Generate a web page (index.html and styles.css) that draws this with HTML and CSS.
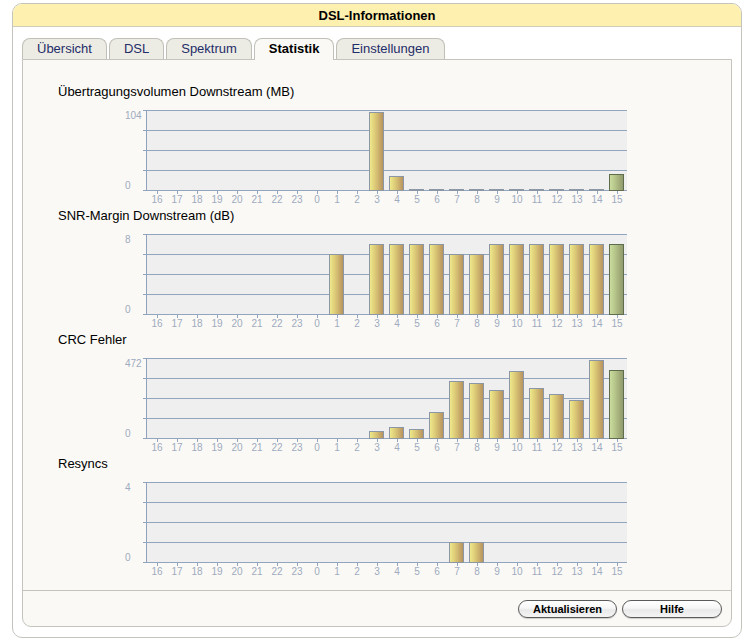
FILE: index.html
```html
<!DOCTYPE html>
<html lang="de">
<head>
<meta charset="utf-8">
<title>DSL-Informationen</title>
<link rel="stylesheet" href="styles.css">
</head>
<body>
<div class="panel">
  <div class="panel-head">DSL-Informationen</div>
  <div class="panel-body">
    <div class="tabs">
      <div class="tab">Übersicht</div>
      <div class="tab">DSL</div>
      <div class="tab">Spektrum</div>
      <div class="tab active">Statistik</div>
      <div class="tab">Einstellungen</div>
    </div>
    <div class="content">
      <div class="charts">

        <section class="chart">
          <div class="chart-title">Übertragungsvolumen Downstream (MB)</div>
          <div class="chart-row">
            <div class="yaxis"><span class="ylab">104</span><span class="ylab">0</span></div>
            <div class="yticks"></div>
            <div class="plot">
              <div class="slot"></div><div class="slot"></div><div class="slot"></div><div class="slot"></div>
              <div class="slot"></div><div class="slot"></div><div class="slot"></div><div class="slot"></div>
              <div class="slot"></div><div class="slot"></div><div class="slot"></div>
              <div class="slot"><div class="bar" style="height:79px"></div></div>
              <div class="slot"><div class="bar" style="height:15px"></div></div>
              <div class="slot"><div class="bar zero"></div></div>
              <div class="slot"><div class="bar zero"></div></div>
              <div class="slot"><div class="bar zero"></div></div>
              <div class="slot"><div class="bar zero"></div></div>
              <div class="slot"><div class="bar zero"></div></div>
              <div class="slot"><div class="bar zero"></div></div>
              <div class="slot"><div class="bar zero"></div></div>
              <div class="slot"><div class="bar zero"></div></div>
              <div class="slot"><div class="bar zero"></div></div>
              <div class="slot"><div class="bar zero"></div></div>
              <div class="slot"><div class="bar current" style="height:17px"></div></div>
            </div>
          </div>
          <div class="xaxis">
            <span class="xl">16</span><span class="xl">17</span><span class="xl">18</span><span class="xl">19</span><span class="xl">20</span><span class="xl">21</span><span class="xl">22</span><span class="xl">23</span><span class="xl">0</span><span class="xl">1</span><span class="xl">2</span><span class="xl">3</span><span class="xl">4</span><span class="xl">5</span><span class="xl">6</span><span class="xl">7</span><span class="xl">8</span><span class="xl">9</span><span class="xl">10</span><span class="xl">11</span><span class="xl">12</span><span class="xl">13</span><span class="xl">14</span><span class="xl">15</span>
          </div>
        </section>

        <section class="chart">
          <div class="chart-title">SNR-Margin Downstream (dB)</div>
          <div class="chart-row">
            <div class="yaxis"><span class="ylab">8</span><span class="ylab">0</span></div>
            <div class="yticks"></div>
            <div class="plot">
              <div class="slot"></div><div class="slot"></div><div class="slot"></div><div class="slot"></div>
              <div class="slot"></div><div class="slot"></div><div class="slot"></div><div class="slot"></div>
              <div class="slot"></div>
              <div class="slot"><div class="bar" style="height:61px"></div></div>
              <div class="slot"></div>
              <div class="slot"><div class="bar" style="height:71px"></div></div>
              <div class="slot"><div class="bar" style="height:71px"></div></div>
              <div class="slot"><div class="bar" style="height:71px"></div></div>
              <div class="slot"><div class="bar" style="height:71px"></div></div>
              <div class="slot"><div class="bar" style="height:61px"></div></div>
              <div class="slot"><div class="bar" style="height:61px"></div></div>
              <div class="slot"><div class="bar" style="height:71px"></div></div>
              <div class="slot"><div class="bar" style="height:71px"></div></div>
              <div class="slot"><div class="bar" style="height:71px"></div></div>
              <div class="slot"><div class="bar" style="height:71px"></div></div>
              <div class="slot"><div class="bar" style="height:71px"></div></div>
              <div class="slot"><div class="bar" style="height:71px"></div></div>
              <div class="slot"><div class="bar current" style="height:71px"></div></div>
            </div>
          </div>
          <div class="xaxis">
            <span class="xl">16</span><span class="xl">17</span><span class="xl">18</span><span class="xl">19</span><span class="xl">20</span><span class="xl">21</span><span class="xl">22</span><span class="xl">23</span><span class="xl">0</span><span class="xl">1</span><span class="xl">2</span><span class="xl">3</span><span class="xl">4</span><span class="xl">5</span><span class="xl">6</span><span class="xl">7</span><span class="xl">8</span><span class="xl">9</span><span class="xl">10</span><span class="xl">11</span><span class="xl">12</span><span class="xl">13</span><span class="xl">14</span><span class="xl">15</span>
          </div>
        </section>

        <section class="chart">
          <div class="chart-title">CRC Fehler</div>
          <div class="chart-row">
            <div class="yaxis"><span class="ylab">472</span><span class="ylab">0</span></div>
            <div class="yticks"></div>
            <div class="plot">
              <div class="slot"></div><div class="slot"></div><div class="slot"></div><div class="slot"></div>
              <div class="slot"></div><div class="slot"></div><div class="slot"></div><div class="slot"></div>
              <div class="slot"></div><div class="slot"></div><div class="slot"></div>
              <div class="slot"><div class="bar" style="height:8px"></div></div>
              <div class="slot"><div class="bar" style="height:12px"></div></div>
              <div class="slot"><div class="bar" style="height:10px"></div></div>
              <div class="slot"><div class="bar" style="height:27px"></div></div>
              <div class="slot"><div class="bar" style="height:58px"></div></div>
              <div class="slot"><div class="bar" style="height:56px"></div></div>
              <div class="slot"><div class="bar" style="height:49px"></div></div>
              <div class="slot"><div class="bar" style="height:68px"></div></div>
              <div class="slot"><div class="bar" style="height:51px"></div></div>
              <div class="slot"><div class="bar" style="height:45px"></div></div>
              <div class="slot"><div class="bar" style="height:39px"></div></div>
              <div class="slot"><div class="bar" style="height:79px"></div></div>
              <div class="slot"><div class="bar current" style="height:69px"></div></div>
            </div>
          </div>
          <div class="xaxis">
            <span class="xl">16</span><span class="xl">17</span><span class="xl">18</span><span class="xl">19</span><span class="xl">20</span><span class="xl">21</span><span class="xl">22</span><span class="xl">23</span><span class="xl">0</span><span class="xl">1</span><span class="xl">2</span><span class="xl">3</span><span class="xl">4</span><span class="xl">5</span><span class="xl">6</span><span class="xl">7</span><span class="xl">8</span><span class="xl">9</span><span class="xl">10</span><span class="xl">11</span><span class="xl">12</span><span class="xl">13</span><span class="xl">14</span><span class="xl">15</span>
          </div>
        </section>

        <section class="chart">
          <div class="chart-title">Resyncs</div>
          <div class="chart-row">
            <div class="yaxis"><span class="ylab">4</span><span class="ylab">0</span></div>
            <div class="yticks"></div>
            <div class="plot">
              <div class="slot"></div><div class="slot"></div><div class="slot"></div><div class="slot"></div>
              <div class="slot"></div><div class="slot"></div><div class="slot"></div><div class="slot"></div>
              <div class="slot"></div><div class="slot"></div><div class="slot"></div><div class="slot"></div>
              <div class="slot"></div><div class="slot"></div><div class="slot"></div>
              <div class="slot"><div class="bar" style="height:21px"></div></div>
              <div class="slot"><div class="bar" style="height:21px"></div></div>
              <div class="slot"></div><div class="slot"></div><div class="slot"></div><div class="slot"></div>
              <div class="slot"></div><div class="slot"></div><div class="slot"></div>
            </div>
          </div>
          <div class="xaxis">
            <span class="xl">16</span><span class="xl">17</span><span class="xl">18</span><span class="xl">19</span><span class="xl">20</span><span class="xl">21</span><span class="xl">22</span><span class="xl">23</span><span class="xl">0</span><span class="xl">1</span><span class="xl">2</span><span class="xl">3</span><span class="xl">4</span><span class="xl">5</span><span class="xl">6</span><span class="xl">7</span><span class="xl">8</span><span class="xl">9</span><span class="xl">10</span><span class="xl">11</span><span class="xl">12</span><span class="xl">13</span><span class="xl">14</span><span class="xl">15</span>
          </div>
        </section>

      </div>
      <div class="footer">
        <button class="btn btn-refresh" type="button">Aktualisieren</button>
        <button class="btn btn-help" type="button">Hilfe</button>
      </div>
    </div>
  </div>
</div>
</body>
</html>
```

FILE: styles.css
```css
* { box-sizing: border-box; }

html, body {
  margin: 0;
  padding: 0;
  background: #ffffff;
}

body {
  font-family: "Liberation Sans", Arial, sans-serif;
  color: #000;
}

.panel {
  margin: 3px 0 0 12px;
  width: 730px;
  border: 1px solid #c4c4bc;
  border-radius: 10px;
  background: #ffffff;
  overflow: hidden;
}

.panel-head {
  height: 23px;
  padding-top: 1px;
  border-bottom: 1px solid #cfcdb8;
  background: #fef0af;
  font-weight: bold;
  font-size: 13px;
  line-height: 21px;
  text-align: center;
}

.panel-body {
  padding: 11px 9px 10px 9px;
}

.tabs {
  display: flex;
  align-items: flex-end;
  gap: 2px;
  height: 21px;
}

.tab {
  height: 21px;
  padding: 0 14px;
  border: 1px solid #c0c0b8;
  border-bottom: 0;
  border-radius: 8px 8px 0 0;
  background: #ecebe4;
  color: #1f2d68;
  font-size: 13px;
  line-height: 20px;
  white-space: nowrap;
}

.tab.active {
  position: relative;
  height: 22px;
  margin-bottom: -1px;
  background: #faf9f5;
  color: #000;
  font-weight: bold;
}

.content {
  border: 1px solid #c4c4bc;
  border-radius: 0 0 9px 9px;
  background: #faf9f5;
}

.charts {
  padding-top: 24px;
  padding-bottom: 10px;
}

.chart-title {
  margin-left: 35px;
  margin-bottom: 10px;
  height: 16px;
  font-size: 13px;
  line-height: 16px;
  color: #000;
  white-space: nowrap;
}

.chart-row {
  display: flex;
  height: 81px;
}

.yaxis {
  width: 120px;
  height: 81px;
  padding: 1px 0 0 102px;
  display: flex;
  flex-direction: column;
  justify-content: space-between;
}

.ylab {
  display: block;
  font-size: 10px;
  line-height: 10px;
  color: #9eabc0;
}

.yticks {
  width: 3px;
  height: 81px;
  background: repeating-linear-gradient(to bottom, #91a5bf 0, #91a5bf 1px, transparent 1px, transparent 20px);
}

.plot {
  display: flex;
  align-items: flex-end;
  width: 481px;
  height: 81px;
  border-left: 1px solid #8ea2bb;
  background: repeating-linear-gradient(to bottom, #91a5bf 0, #91a5bf 1px, #efefef 1px, #efefef 20px);
}

.slot {
  display: flex;
  align-items: flex-end;
  width: 20px;
  height: 81px;
}

.bar {
  width: 15px;
  margin-left: 2px;
  border: 1px solid #8b97a5;
  background: linear-gradient(to right, #eee88b 0%, #e1d27c 30%, #cdb36c 65%, #b8935f 100%);
}

.bar.zero {
  height: 2px;
  background: #8b97a5;
}

.bar.current {
  border-color: #5e6d4d;
  background: linear-gradient(to right, #cadc9d 0%, #b8c88c 35%, #a3ae7b 70%, #919b6c 100%);
}

.xaxis {
  display: flex;
  height: 17px;
  margin-left: 124px;
}

.xl {
  display: block;
  width: 20px;
  height: 17px;
  padding-top: 4px;
  font-size: 10px;
  line-height: 10px;
  text-align: center;
  color: #9eabc0;
  background: linear-gradient(#91a5bf, #91a5bf) no-repeat 50% 0 / 1px 3px;
}

.footer {
  display: flex;
  justify-content: flex-end;
  gap: 5px;
  height: 36px;
  padding: 9px 9px 0 0;
  border-top: 1px solid #c4c4bc;
}

.btn {
  height: 18px;
  padding: 0;
  border: 1px solid #5b5b5b;
  border-radius: 9px;
  background: linear-gradient(to bottom, #ffffff 0%, #f6f6f6 45%, #e9e9e9 55%, #f4f4f4 100%);
  box-shadow: 0 1px 1px rgba(0, 0, 0, 0.18);
  font-family: "Liberation Sans", Arial, sans-serif;
  font-weight: bold;
  font-size: 11px;
  line-height: 16px;
  color: #000;
  text-align: center;
}

.btn-refresh { width: 99px; }
.btn-help { width: 100px; }
```
